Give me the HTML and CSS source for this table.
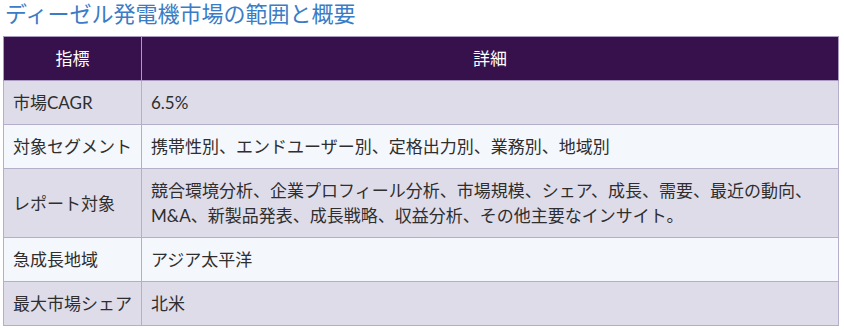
FILE: index.html
```html
<!DOCTYPE html>
<html lang="ja">
<head>
<meta charset="utf-8">
<link rel="stylesheet" href="styles.css">
</head>
<body>
<div class="page">
  <h2 class="title">ディーゼル発電機市場の範囲と概要</h2>
  <table class="summary">
    <thead>
      <tr><th class="col-key">指標</th><th class="col-val">詳細</th></tr>
    </thead>
    <tbody>
      <tr class="odd"><td>市場CAGR</td><td>6.5%</td></tr>
      <tr class="even"><td>対象セグメント</td><td>携帯性別、エンドユーザー別、定格出力別、業務別、地域別</td></tr>
      <tr class="odd"><td>レポート対象</td><td>競合環境分析、企業プロフィール分析、市場規模、シェア、成長、需要、最近の動向、M&amp;A、新製品発表、成長戦略、収益分析、その他主要なインサイト。</td></tr>
      <tr class="even"><td>急成長地域</td><td>アジア太平洋</td></tr>
      <tr class="odd"><td>最大市場シェア</td><td>北米</td></tr>
    </tbody>
  </table>
</div>
</body>
</html>
```

FILE: styles.css
```css
html, body {
  margin: 0;
  padding: 0;
  background: #ffffff;
}
.page {
  padding: 0 5px 0 3px;
  font-family: Lato, "Noto Sans CJK JP", sans-serif;
}
.title {
  margin: 0 0 13px 2px;
  padding-top: 1px;
  font-size: 22px;
  line-height: 22px;
  font-weight: 400;
  color: #3a7cc6;
  font-family: "Noto Sans CJK JP", sans-serif;
}
.summary {
  width: 836px;
  border-collapse: collapse;
  border: 1px solid #b4aecb;
  font-size: 17px;
  line-height: 25px;
  color: #2e2e2e;
  font-weight: 400;
}
.summary th {
  background: #37114b;
  color: #ffffff;
  font-weight: 400;
  text-align: center;
  padding: 9px 9px;
  border: 1px solid #a99cc0;
}
.col-key {
  width: 118px;
}
.summary td {
  padding: 9px 9px;
  border: 1px solid #b4aecb;
  vertical-align: middle;
}
.summary td:first-child {
  white-space: nowrap;
}
.odd td {
  background: #dfdcea;
}
.even td {
  background: #f4f7fc;
}
```
